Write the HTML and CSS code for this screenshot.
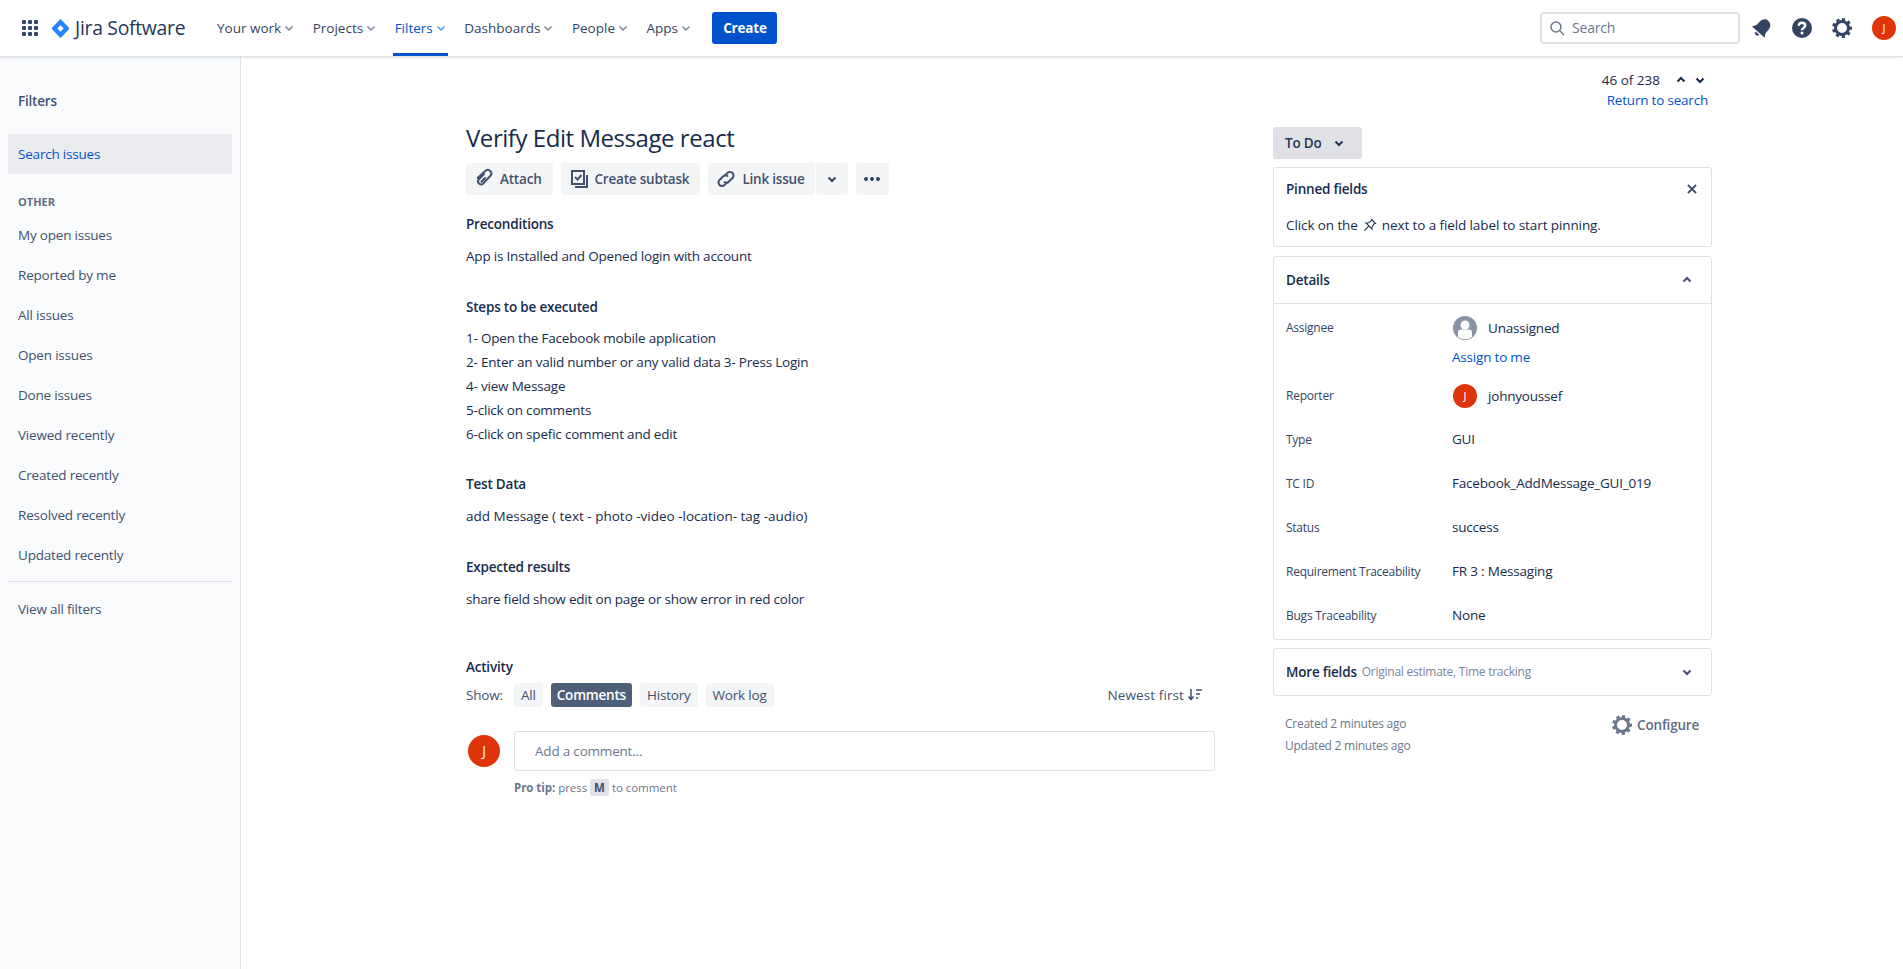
FILE: index.html
```html
<!DOCTYPE html>
<html lang="en">
<head>
  <meta charset="utf-8">
  <title>Verify Edit Message react</title>
  <link rel="stylesheet" href="styles.css">
</head>
<body>
  <header class="topbar">
    <svg class="apps-icon" width="16" height="16" viewBox="0 0 16 16" fill="#344563"><rect width="4" height="4" rx="1"/><rect x="6" width="4" height="4" rx="1"/><rect x="12" width="4" height="4" rx="1"/><rect y="6" width="4" height="4" rx="1"/><rect x="6" y="6" width="4" height="4" rx="1"/><rect x="12" y="6" width="4" height="4" rx="1"/><rect y="12" width="4" height="4" rx="1"/><rect x="6" y="12" width="4" height="4" rx="1"/><rect x="12" y="12" width="4" height="4" rx="1"/></svg>
    <a class="logo">
      <svg width="17" height="19" viewBox="0 0 17 19"><path fill="#2684ff" d="M8.5 0 16.5 8.2a1.8 1.8 0 0 1 0 2.6L8.5 19 .5 10.8a1.8 1.8 0 0 1 0-2.6z"/><path fill="#fff" d="M8.5 6.3 11.600 9.500 8.500 12.700 5.400 9.500z"/></svg>
      <span>Jira Software</span>
    </a>
    <nav class="nav">
      <a class="nav-item">Your work<svg class="chev" width="10" height="10" viewBox="0 0 10 10"><path d="M1.5 3.5 5 7l3.500-3.500"/></svg></a>
      <a class="nav-item">Projects<svg class="chev" width="10" height="10" viewBox="0 0 10 10"><path d="M1.5 3.5 5 7l3.500-3.500"/></svg></a>
      <a class="nav-item active">Filters<svg class="chev" width="10" height="10" viewBox="0 0 10 10"><path d="M1.5 3.5 5 7l3.500-3.500"/></svg></a>
      <a class="nav-item">Dashboards<svg class="chev" width="10" height="10" viewBox="0 0 10 10"><path d="M1.5 3.5 5 7l3.500-3.500"/></svg></a>
      <a class="nav-item">People<svg class="chev" width="10" height="10" viewBox="0 0 10 10"><path d="M1.5 3.5 5 7l3.500-3.500"/></svg></a>
      <a class="nav-item">Apps<svg class="chev" width="10" height="10" viewBox="0 0 10 10"><path d="M1.5 3.5 5 7l3.500-3.500"/></svg></a>
    </nav>
    <button class="create">Create</button>
    <div class="search">
      <svg width="16" height="16" viewBox="0 0 16 16" fill="none" stroke="#6b778c" stroke-width="1.5"><circle cx="7" cy="7" r="5"/><path d="m11 11 4 4"/></svg>
      <span>Search</span>
    </div>
    <svg class="top-icon" width="24" height="24" viewBox="0 0 24 24" fill="#344563"><g transform="rotate(42 12 12)"><path d="M12 2.500c-4 0-6 3.200-6 6.700v4.300l-2.500 4h17l-2.500-4V9.200c0-3.500-2-6.700-6-6.700z"/><path d="M9.500 18.800h5a2.500 2.500 0 0 1-5 0z"/></g></svg>
    <svg class="top-icon" width="24" height="24" viewBox="0 0 24 24"><circle cx="12" cy="12" r="10" fill="#344563"/><path fill="none" stroke="#fff" stroke-width="2.4" d="M8.800 9.700c0-1.900 1.400-3 3.200-3 1.900 0 3.200 1.100 3.200 2.800 0 2.300-3.200 2.400-3.200 4.700"/><circle cx="12" cy="17" r="1.5" fill="#fff"/></svg>
    <svg class="top-icon" width="24" height="24" viewBox="0 0 24 24"><circle cx="12" cy="12" r="6.500" fill="none" stroke="#344563" stroke-width="3"/><path fill="none" stroke="#344563" stroke-width="3" stroke-dasharray="3 2.890" d="M12 3.500a8.500 8.500 0 1 1-.01 0"/></svg>
    <span class="avatar small top-avatar">J</span>
  </header>

  <div class="page">
    <aside class="sidebar">
      <h4 class="side-title">Filters</h4>
      <a class="side-link current">Search issues</a>
      <h5 class="side-group">OTHER</h5>
      <a class="side-link">My open issues</a>
      <a class="side-link">Reported by me</a>
      <a class="side-link">All issues</a>
      <a class="side-link">Open issues</a>
      <a class="side-link">Done issues</a>
      <a class="side-link">Viewed recently</a>
      <a class="side-link">Created recently</a>
      <a class="side-link">Resolved recently</a>
      <a class="side-link">Updated recently</a>
      <hr class="side-rule">
      <a class="side-link">View all filters</a>
    </aside>

    <main class="content">
      <div class="pager">
        <div class="pager-row">
          <span class="pager-count">46 of 238</span>
          <svg class="pager-arrow" width="12" height="12" viewBox="0 0 12 12"><path d="M2.500 7.500 6 4l3.500 3.500"/></svg>
          <svg class="pager-arrow" width="12" height="12" viewBox="0 0 12 12"><path d="M2.500 4.500 6 8l3.500-3.500"/></svg>
        </div>
        <a class="link">Return to search</a>
      </div>

      <div class="issue">
        <section class="issue-main">
          <h1>Verify Edit Message react</h1>
          <div class="actions">
            <button class="btn">
              <svg width="24" height="24" viewBox="0 0 24 24" fill="none" stroke="#42526e" stroke-width="2" stroke-linecap="round"><path d="m12 7-5.300 5.600c-2.300 2.500 1.700 6.700 4.200 4.100l7.400-7.700c3.200-3.500-1.800-8.200-5-5L5.700 11"/><path d="m13 11-3.600 3.800"/></svg>
              Attach
            </button>
            <button class="btn">
              <svg width="24" height="24" viewBox="0 0 24 24" fill="none" stroke="#42526e" stroke-width="2"><path d="M5 4h12v13H5z"/><path d="m8 10 2.500 2.500L14.500 8"/><path d="M20 8v12H8"/></svg>
              Create subtask
            </button>
            <div class="btn-group">
              <button class="btn link-issue">
                <svg width="24" height="24" viewBox="0 0 24 24" fill="none" stroke="#42526e" stroke-width="2" stroke-linecap="round"><path d="M11 8.500 13.500 6a3.500 3.500 0 0 1 5 5L15 14.500a3.500 3.500 0 0 1-4.500.5"/><path d="M13 15.500 10.500 18a3.500 3.500 0 0 1-5-5L9 9.500a3.500 3.500 0 0 1 4.500-.5"/></svg>
                Link issue
              </button>
              <button class="btn caret">
                <svg width="12" height="12" viewBox="0 0 12 12" fill="none" stroke="#344563" stroke-width="2"><path d="M2.500 4.500 6 8l3.500-3.500"/></svg>
              </button>
            </div>
            <button class="btn more">
              <svg width="18" height="6" viewBox="0 0 18 6" fill="#344563"><circle cx="3" cy="3" r="2"/><circle cx="9" cy="3" r="2"/><circle cx="15" cy="3" r="2"/></svg>
            </button>
          </div>

          <h3 class="first">Preconditions</h3>
          <p>App is Installed and Opened login with account</p>

          <h3>Steps to be executed</h3>
          <ul class="steps">
            <li>1- Open the Facebook mobile application</li>
            <li>2- Enter an valid number or any valid data 3- Press Login</li>
            <li>4- view Message</li>
            <li>5-click on comments</li>
            <li>6-click on spefic comment and edit</li>
          </ul>

          <h3>Test Data</h3>
          <p class="wide">add Message ( text - photo -video -location- tag -audio)</p>

          <h3>Expected results</h3>
          <p>share field show edit on page or show error in red color</p>

          <h3 class="activity-title">Activity</h3>
          <div class="activity-bar">
            <span class="show">Show:</span>
            <button class="tab">All</button>
            <button class="tab on">Comments</button>
            <button class="tab">History</button>
            <button class="tab">Work log</button>
            <span class="sort">Newest first
              <svg width="16" height="16" viewBox="0 0 16 16" fill="none" stroke="#42526e" stroke-width="1.5"><path d="M4 2v10M1.500 9.500 4 12.500l2.500-3M9 3h6M9 7h4M9 11h2"/></svg>
            </span>
          </div>
          <div class="comment">
            <span class="avatar big">J</span>
            <div class="comment-box">Add a comment...</div>
          </div>
          <p class="tip"><b>Pro tip:</b> press <kbd>M</kbd> to comment</p>
        </section>

        <aside class="issue-side">
          <button class="status">To Do
            <svg width="12" height="12" viewBox="0 0 12 12" fill="none" stroke="#253858" stroke-width="2"><path d="M2.500 4.500 6 8l3.500-3.500"/></svg>
          </button>

          <div class="card pinned">
            <div class="pinned-head">
              <strong>Pinned fields</strong>
              <svg width="12" height="12" viewBox="0 0 12 12" fill="none" stroke="#42526e" stroke-width="2"><path d="m2 2 8 8M10 2l-8 8"/></svg>
            </div>
            <div class="pinned-text">Click on the
              <svg width="14" height="14" viewBox="0 0 14 14" fill="none" stroke="#253858" stroke-width="1.1"><path d="M8.500 1.500 12.500 5.500 10.800 6 8.800 9.500 9 11 3 5 4.500 5.200 8 3.200zM5.800 8.200 1.500 12.500"/></svg>
              next to a field label to start pinning.</div>
          </div>

          <div class="card details">
            <div class="card-head">
              <strong>Details</strong>
              <svg class="card-chev" width="12" height="12" viewBox="0 0 12 12"><path d="M2.500 7.500 6 4l3.500 3.500"/></svg>
            </div>
            <dl class="fields">
              <dt>Assignee</dt>
              <dd>
                <div class="person">
                  <svg width="24" height="24" viewBox="0 0 24 24"><circle cx="12" cy="12" r="12" fill="#8993a4"/><circle cx="12" cy="9" r="4.500" fill="#fff"/><path fill="#fff" d="M5 16.500a3 3 0 0 1 3-3h8a3 3 0 0 1 3 3V21a12 12 0 0 1-14 0z"/></svg>
                  Unassigned
                </div>
                <a class="link assign">Assign to me</a>
              </dd>
              <dt>Reporter</dt>
              <dd><div class="person"><span class="avatar small">J</span>johnyoussef</div></dd>
              <dt>Type</dt><dd>GUI</dd>
              <dt>TC ID</dt><dd>Facebook_AddMessage_GUI_019</dd>
              <dt>Status</dt><dd>success</dd>
              <dt>Requirement Traceability</dt><dd>FR 3 : Messaging</dd>
              <dt>Bugs Traceability</dt><dd>None</dd>
            </dl>
          </div>

          <div class="card more-fields">
            <strong>More fields</strong>
            <span class="hint">Original estimate, Time tracking</span>
            <svg class="card-chev" width="12" height="12" viewBox="0 0 12 12"><path d="M2.500 4.500 6 8l3.500-3.500"/></svg>
          </div>

          <div class="dates">
            <div class="stamps">
              <div>Created 2 minutes ago</div>
              <div>Updated 2 minutes ago</div>
            </div>
            <a class="configure">
              <svg width="24" height="24" viewBox="0 0 24 24"><circle cx="12" cy="12" r="6.500" fill="none" stroke="#6b778c" stroke-width="3"/><path fill="none" stroke="#6b778c" stroke-width="3" stroke-dasharray="3 2.890" d="M12 3.500a8.500 8.500 0 1 1-.01 0"/></svg>
              Configure
            </a>
          </div>
        </aside>
      </div>
    </main>
  </div>
</body>
</html>
```

FILE: styles.css
```css
* {
  box-sizing: border-box;
}

html, body {
  height: 100%;
}

body {
  margin: 0;
  font-family: "Open Sans", "Liberation Sans", sans-serif;
  font-size: 13.5px;
  line-height: 20px;
  letter-spacing: -0.2px;
  color: #172b4d;
  background: #fff;
  overflow: hidden;
}

button {
  font: inherit;
  letter-spacing: inherit;
  border: 0;
  cursor: pointer;
}

/* top bar */
.topbar {
  height: 57px;
  display: flex;
  align-items: center;
  border-bottom: 1px solid #dfe1e6;
  box-shadow: 0 1px 2px rgba(9, 30, 66, 0.1);
  padding-left: 22px;
  position: relative;
}

.logo {
  display: flex;
  align-items: center;
  margin-left: 14px;
  color: #253858;
}

.logo span {
  margin-left: 6px;
  width: 140px;
  font-size: 19.4px;
  letter-spacing: -0.3px;
}

.nav {
  display: flex;
  height: 56px;
}

.nav-item {
  display: flex;
  align-items: center;
  padding: 0 2px;
  margin-right: 14.5px;
  letter-spacing: 0;
  color: #344563;
  font-weight: 500;
  border-bottom: 3px solid transparent;
  border-top: 3px solid transparent;
}

.nav-item.active {
  color: #0052cc;
  border-bottom-color: #0052cc;
}

.chev {
  margin-left: 3px;
  fill: none;
  stroke: #7a869a;
  stroke-width: 1.5;
}

.active .chev {
  stroke: #4c9aff;
}

.create {
  width: 65px;
  height: 32px;
  margin-left: 5px;
  border-radius: 3px;
  background: #0052cc;
  color: #fff;
  font-weight: 700;
}

.search {
  width: 200px;
  height: 32px;
  margin-left: auto;
  margin-right: 10px;
  padding-left: 7px;
  display: flex;
  align-items: center;
  gap: 7px;
  border: 2px solid #dfe1e6;
  border-radius: 4px;
  font-size: 14px;
  color: #6b778c;
}

.top-icon {
  margin-right: 16px;
}

.top-avatar {
  margin-left: 2px;
  margin-right: 7px;
}

.avatar {
  display: inline-flex;
  align-items: center;
  justify-content: center;
  flex: none;
  border-radius: 50%;
  background: #de350b;
  color: #fff;
}

.avatar.small {
  width: 24px;
  height: 24px;
  font-size: 11px;
}

.avatar.big {
  width: 32px;
  height: 32px;
  font-size: 14px;
}

/* page columns */
.page {
  display: flex;
  height: calc(100% - 57px);
}

.sidebar {
  width: 241px;
  flex: none;
  padding: 34px 8px 0;
  background: #fafbfc;
  border-right: 1px solid #dfe1e6;
}

.side-title {
  margin: 0 0 23px 10px;
  font-size: 13.5px;
  font-weight: 600;
  color: #42526e;
}

.side-link {
  display: flex;
  align-items: center;
  height: 40px;
  padding-left: 10px;
  color: #42526e;
}

.side-link.current {
  background: #ebecf0;
  color: #0052cc;
  border-radius: 3px;
}

.side-group {
  margin: 18px 0 3px 10px;
  font-size: 11px;
  font-weight: 700;
  line-height: 20px;
  letter-spacing: 0;
  color: #5e6c84;
}

.side-rule {
  margin: 6px 0 7px;
  border: 0;
  border-top: 1px solid #dfe1e6;
}

.content {
  flex: 1;
  min-width: 0;
}

.pager {
  width: 108px;
  height: 40px;
  margin: 13px 0 0 1359px;
  text-align: right;
  white-space: nowrap;
}

.pager-row {
  display: flex;
  align-items: center;
  justify-content: flex-end;
  gap: 7px;
  padding-right: 2px;
}

.pager-count {
  margin-right: 8px;
  letter-spacing: 0;
}

.pager-arrow {
  fill: none;
  stroke: #172b4d;
  stroke-width: 2;
}

.link {
  color: #0052cc;
}

.issue {
  display: flex;
  padding-left: 225px;
}

/* issue main column */
.issue-main {
  width: 749px;
  flex: none;
}

h1 {
  margin: 12px 0 0;
  font-size: 24px;
  line-height: 32px;
  font-weight: 500;
  letter-spacing: -0.45px;
}

.actions {
  display: flex;
  gap: 8px;
  margin-top: 9px;
}

.btn {
  display: flex;
  align-items: center;
  gap: 4px;
  height: 32px;
  padding: 0 11px 0 6px;
  border-radius: 3px;
  background: #f4f5f7;
  color: #42526e;
  font-weight: 600;
}

.btn-group {
  display: flex;
  gap: 1px;
}

.link-issue {
  padding-right: 10px;
}

.caret {
  width: 32px;
  padding: 0;
  justify-content: center;
}

.more {
  width: 33px;
  padding: 0;
  justify-content: center;
}

h3 {
  margin: 31px 0 0;
  font-size: 13.5px;
  line-height: 20px;
  font-weight: 600;
}

h3.first {
  margin-top: 19px;
}

.issue-main p {
  margin: 12px 0 0;
}

.issue-main p.wide {
  letter-spacing: 0;
}

.steps {
  margin: 9px 0 -3px;
  padding: 0;
  list-style: none;
}

.steps li {
  height: 24px;
  line-height: 24px;
}

h3.activity-title {
  margin-top: 48px;
}

.activity-bar {
  display: flex;
  align-items: center;
  gap: 8px;
  margin-top: 6px;
}

.show {
  width: 40px;
  color: #42526e;
}

.tab {
  height: 24px;
  padding: 0 7px;
  border-radius: 3px;
  background: #f4f5f7;
  color: #42526e;
  font-weight: 400;
}

.tab.on {
  padding: 0 6px;
  background: #505f79;
  color: #fff;
  font-weight: 600;
}

.sort {
  display: flex;
  align-items: center;
  gap: 3px;
  margin-left: auto;
  margin-right: 12px;
  letter-spacing: 0.1px;
  color: #42526e;
}

.comment {
  display: flex;
  align-items: center;
  gap: 14px;
  margin-top: 24px;
  padding-left: 2px;
}

.comment-box {
  flex: 1;
  height: 40px;
  padding: 9px 20px;
  border: 1px solid #dfe1e6;
  border-radius: 3px;
  color: #6b778c;
}

.issue-main .tip {
  margin: 7px 0 0 48px;
  font-size: 11.5px;
  letter-spacing: -0.05px;
  color: #6b778c;
}

.tip kbd {
  display: inline-block;
  width: 19px;
  height: 17px;
  text-align: center;
  border-radius: 3px;
  background: #dfe1e6;
  color: #42526e;
  font: 700 11.5px/17px "Open Sans", sans-serif;
}

/* right column */
.issue-side {
  width: 439px;
  flex: none;
  margin-left: 58px;
  margin-top: 17px;
}

.status {
  display: flex;
  align-items: center;
  gap: 11px;
  width: 89px;
  height: 32px;
  padding-left: 12px;
  border-radius: 3px;
  background: #dfe1e6;
  color: #253858;
  font-weight: 600;
}

.card {
  margin-top: 8px;
  border: 1px solid #dfe1e6;
  border-radius: 3px;
}

.card strong {
  font-weight: 600;
}

.pinned {
  height: 80px;
  padding: 11px 12px;
}

.pinned-head {
  display: flex;
  align-items: center;
  justify-content: space-between;
  padding-right: 1px;
}

.pinned-text {
  display: flex;
  align-items: center;
  gap: 5px;
  margin-top: 16px;
  letter-spacing: -0.1px;
}

.details {
  margin-top: 9px;
}

.card-head {
  display: flex;
  align-items: center;
  justify-content: space-between;
  height: 47px;
  padding: 0 12px;
  border-bottom: 1px solid #dfe1e6;
}

.card-chev {
  fill: none;
  stroke: #42526e;
  stroke-width: 2;
  margin-right: 6px;
}

.fields {
  display: grid;
  grid-template-columns: 166px 1fr;
  grid-template-rows: 68px repeat(6, 44px);
  align-items: start;
  height: 335px;
  margin: 0;
  padding: 13px 12px 0;
}

.fields dt {
  padding-top: 1px;
  font-size: 12px;
  letter-spacing: -0.25px;
  color: #344563;
}

.fields dd {
  margin: 0;
}

.person {
  display: flex;
  align-items: center;
  gap: 11px;
  height: 24px;
  margin-top: -1px;
  padding-left: 1px;
}

.assign {
  display: block;
  margin-top: 7px;
}

.more-fields {
  display: flex;
  align-items: center;
  height: 48px;
  padding: 0 12px;
}

.hint {
  margin-left: 5px;
  font-size: 12px;
  letter-spacing: -0.25px;
  color: #7a869a;
}

.more-fields .card-chev {
  margin-left: auto;
}

.dates {
  display: flex;
  justify-content: space-between;
  margin-top: 17px;
  padding: 0 13px 0 12px;
  font-size: 12px;
  letter-spacing: -0.25px;
  color: #6b778c;
}

.stamps div {
  height: 22px;
  line-height: 22px;
}

.configure {
  display: flex;
  align-items: center;
  gap: 3px;
  height: 24px;
  font-size: 13.5px;
  font-weight: 600;
  letter-spacing: -0.2px;
  color: #5e6c84;
}
```
